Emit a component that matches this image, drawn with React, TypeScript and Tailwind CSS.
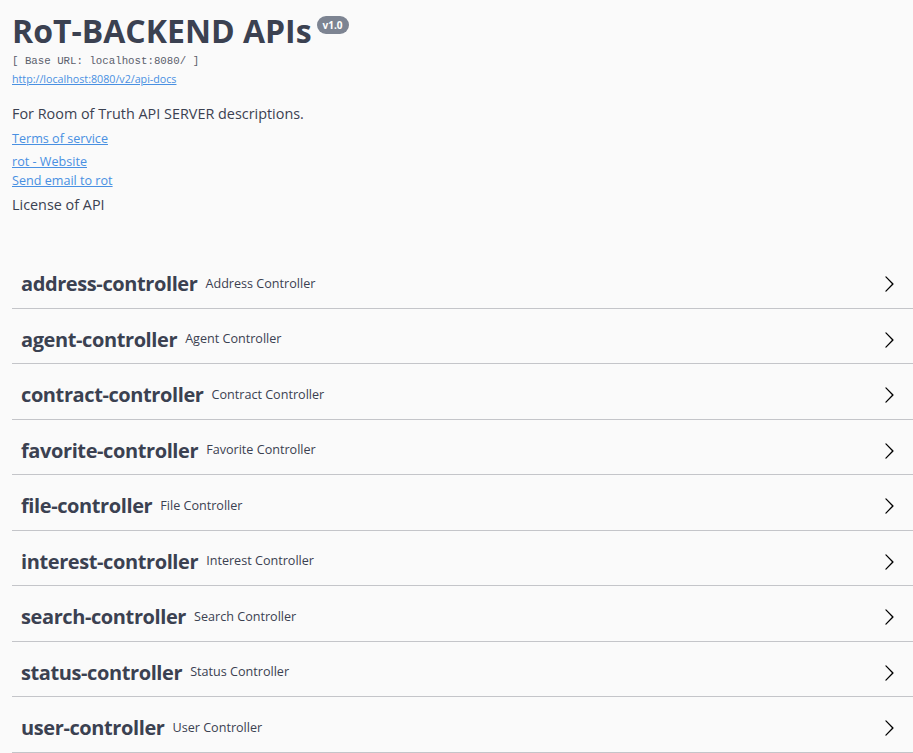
const tags = [
  ["address-controller", "Address Controller"],
  ["agent-controller", "Agent Controller"],
  ["contract-controller", "Contract Controller"],
  ["favorite-controller", "Favorite Controller"],
  ["file-controller", "File Controller"],
  ["interest-controller", "Interest Controller"],
  ["search-controller", "Search Controller"],
  ["status-controller", "Status Controller"],
  ["user-controller", "User Controller"],
];

function Arrow() {
  return (
    <svg viewBox="0 0 20 20" className="ml-auto h-[18px] w-[18px]" fill="#000">
      <path d="M13.25 10L6.109 2.58a.697.697 0 0 1 0-.979.68.68 0 0 1 .969 0l7.83 7.908a.697.697 0 0 1 0 .979l-7.83 7.908a.68.68 0 0 1-.969 0 .697.697 0 0 1 0-.979L13.25 10z" />
    </svg>
  );
}

export default function App() {
  return (
    <div className="min-h-screen bg-[#fafafa] text-[#3b4151] font-['Open_Sans',sans-serif]">
      <div className="pl-3">
        <div className="pt-[11px]">
          <div className="flex items-start">
            <h2 className="text-[32px] font-bold leading-[40px] m-0">RoT-BACKEND APIs</h2>
            <span className="ml-[5px] mt-[5px] rounded-full bg-[#7d8492] px-[6px] py-[1px] text-[10px] font-bold leading-[16px] text-white">
              v1.0
            </span>
          </div>
          <pre className="text-[10.75px] leading-[15px] mt-[3px] font-['Liberation_Mono',monospace] text-[#5b606c]">
            [ Base URL: localhost:8080/ ]
          </pre>
          <a className="block mt-[2px] text-[10.7px] leading-[17px] text-[#4990e2] underline">
            http://localhost:8080/v2/api-docs
          </a>
        </div>
        <p className="mt-[16px] text-[14.4px] leading-[20px]">For Room of Truth API SERVER descriptions.</p>
        <a className="block mt-[5px] text-[12.6px] leading-[20px] text-[#4990e2] underline">Terms of service</a>
        <a className="block mt-[3px] text-[12.6px] leading-[19px] text-[#4990e2] underline">rot - Website</a>
        <a className="block text-[12.6px] leading-[19px] text-[#4990e2] underline">Send email to rot</a>
        <div className="mt-[5px] text-[14.4px] leading-[20px]">License of API</div>
      </div>
      <div className="mt-[38px] pl-3">
        {tags.map(([name, desc]) => (
          <div
            key={name}
            className="flex h-[55.5px] items-center border-b border-[#c4c5c9] pl-[9px] pr-[15px] pt-[8px]"
          >
            <span className="font-['Open_Sans',sans-serif] text-[20px] font-bold tracking-[-0.4px]">{name}</span>
            <span className="ml-[8px] text-[12.6px]">{desc}</span>
            <Arrow />
          </div>
        ))}
      </div>
    </div>
  );
}
